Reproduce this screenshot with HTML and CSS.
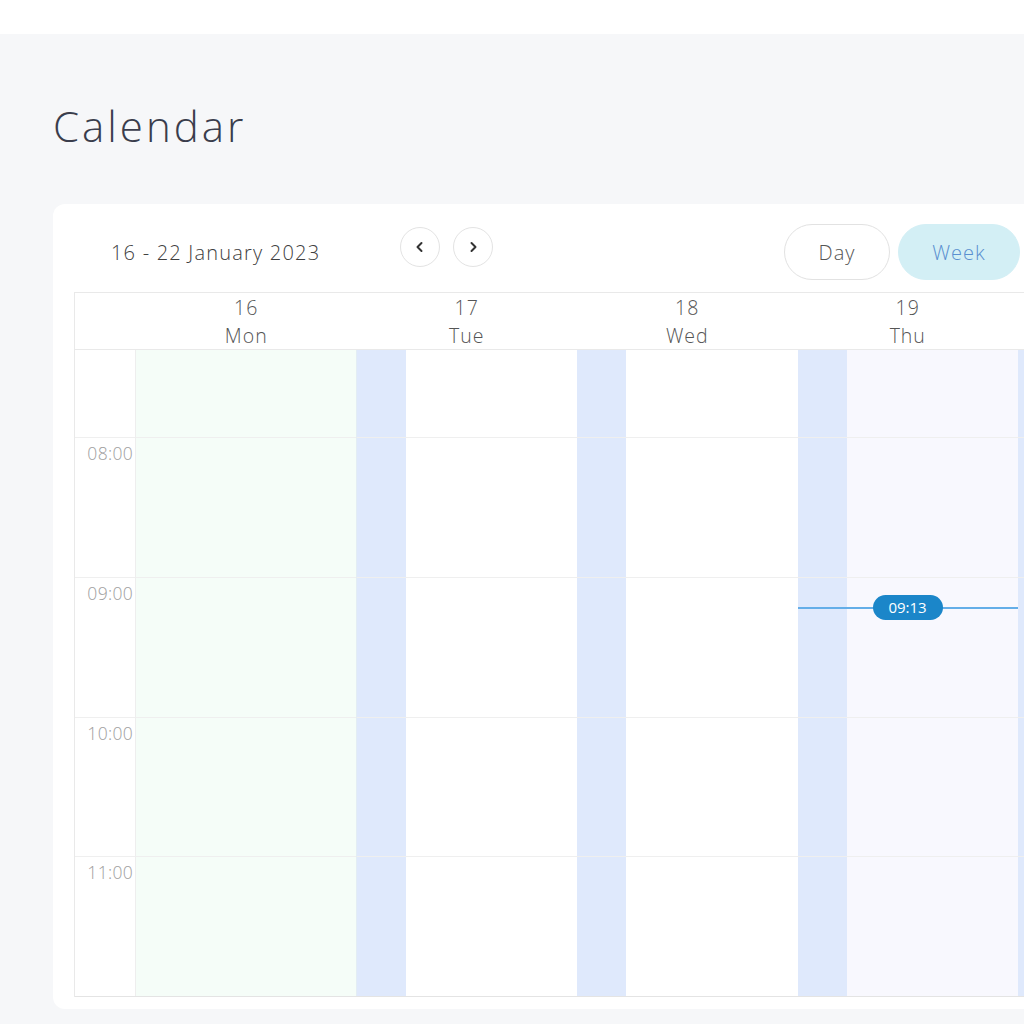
FILE: index.html
```html
<!DOCTYPE html>
<html>
<head>
<meta charset="utf-8">
<link rel="stylesheet" href="styles.css">
</head>
<body>
<div class="topbar"></div>
<main class="main">
  <h1 class="title">Calendar</h1>
  <section class="card">
    <div class="toolbar">
      <div class="range">16 - 22 January 2023</div>
      <div class="nav">
        <button class="circle" aria-label="Previous">
          <svg width="14" height="14" viewBox="0 0 14 14"><path d="M8.5 3 L4.5 7 L8.5 11" fill="none" stroke="#333" stroke-width="2" stroke-linecap="round" stroke-linejoin="round"/></svg>
        </button>
        <button class="circle" aria-label="Next">
          <svg width="14" height="14" viewBox="0 0 14 14"><path d="M5.5 3 L9.5 7 L5.5 11" fill="none" stroke="#333" stroke-width="2" stroke-linecap="round" stroke-linejoin="round"/></svg>
        </button>
      </div>
      <div class="views">
        <button class="pill">Day</button>
        <button class="pill active">Week</button>
      </div>
    </div>
    <div class="grid">
      <div class="head">
        <div class="hcell time"></div>
        <div class="hcell"><span>16</span><span>Mon</span></div>
        <div class="hcell"><span>17</span><span>Tue</span></div>
        <div class="hcell"><span>18</span><span>Wed</span></div>
        <div class="hcell"><span>19</span><span>Thu</span></div>
        <div class="hcell"></div>
      </div>
      <div class="body">
        <div class="col timecol">
          <div class="slot first"></div>
          <div class="slot"><span class="lbl">08:00</span></div>
          <div class="slot"><span class="lbl">09:00</span></div>
          <div class="slot"><span class="lbl">10:00</span></div>
          <div class="slot"><span class="lbl">11:00</span></div>
        </div>
        <div class="col today">
          <div class="slot first"></div><div class="slot"></div><div class="slot"></div><div class="slot"></div><div class="slot"></div>
        </div>
        <div class="col banded">
          <div class="slot first"></div><div class="slot"></div><div class="slot"></div><div class="slot"></div><div class="slot"></div>
        </div>
        <div class="col banded">
          <div class="slot first"></div><div class="slot"></div><div class="slot"></div><div class="slot"></div><div class="slot"></div>
        </div>
        <div class="col banded current">
          <div class="slot first"></div><div class="slot"></div><div class="slot"></div><div class="slot"></div><div class="slot"></div>
          <div class="now"><span class="now-badge">09:13</span></div>
        </div>
        <div class="col banded">
          <div class="slot first"></div><div class="slot"></div><div class="slot"></div><div class="slot"></div><div class="slot"></div>
        </div>
      </div>
    </div>
  </section>
</main>
</body>
</html>
```
FILE: styles.css
```css
* { box-sizing: border-box; }
html, body { margin: 0; padding: 0; }
body {
  width: 1024px;
  height: 1024px;
  overflow: hidden;
  background: #f6f7f9;
  font-family: "Open Sans", "Lato", sans-serif;
  color: #444;
}
.topbar {
  height: 34px;
  background: #ffffff;
}
.main {
  padding: 0 0 0 53px;
}
.title {
  margin: 0;
  padding-top: 66px;
  height: 170px;
  font-size: 42px;
  font-weight: 300;
  color: #3a3d4c;
  line-height: 52px;
  letter-spacing: 3px;
}
.card {
  width: 1100px;
  background: #ffffff;
  border-radius: 12px;
  padding: 20px 0 12px 21px;
}
.toolbar {
  display: flex;
  align-items: flex-start;
  height: 68px;
}
.range {
  margin-left: 37px;
  width: 289px;
  margin-top: 15px;
  font-size: 20px;
  font-weight: 300;
  color: #404040;
  letter-spacing: 1.2px;
  white-space: nowrap;
}
.nav {
  display: flex;
  gap: 13px;
  margin-top: 3px;
}
.circle {
  width: 40px;
  height: 40px;
  border-radius: 50%;
  border: 1px solid #e3e3e3;
  background: #fff;
  display: flex;
  align-items: center;
  justify-content: center;
  padding: 0;
}
.views {
  display: flex;
  gap: 8px;
  margin-left: 291px;
}
.pill {
  height: 56px;
  border-radius: 28px;
  border: 1px solid #e2e2e2;
  background: #fff;
  font-family: inherit;
  font-size: 20px;
  font-weight: 300;
  letter-spacing: 1px;
  color: #555;
  width: 106px;
  padding: 0;
}
.pill.active {
  width: 122px;
  border-color: #d3eff5;
  background: #d3eff5;
  color: #5a8fd0;
}
.grid {
  border-top: 1px solid #e9e9e9;
  border-left: 1px solid #e9e9e9;
}
.head {
  display: flex;
  height: 57px;
  border-bottom: 1px solid #e9e9e9;
}
.hcell {
  width: 220.5px;
  flex: none;
  display: flex;
  flex-direction: column;
  align-items: center;
  padding-top: 1px;
  font-size: 19.5px;
  font-weight: 300;
  letter-spacing: 1px;
  line-height: 28px;
  color: #555;
}
.hcell.time { width: 61px; }
.body {
  display: flex;
  border-bottom: 1px solid #e4e4e4;
}
.col {
  width: 220.5px;
  flex: none;
  position: relative;
}
.timecol {
  width: 61px;
  border-right: 1px solid #eeeeee;
}
.today {
  background: #f5fdf8;
  border-right: 1px solid #e3edf4;
}
.banded {
  background: linear-gradient(to right, #dfe9fc 49px, #ffffff 49px);
}
.banded.current {
  background: linear-gradient(to right, #dfe9fc 49px, #f8f8fe 49px);
}
.slot {
  height: 139.75px;
  border-bottom: 1px solid #efefef;
}
.col .slot:nth-child(5) { border-bottom: none; height: 139px; }
.slot.first { height: 88px; }
.timecol .slot { text-align: right; padding-right: 2px; padding-top: 3px; }
.lbl {
  font-size: 17.5px;
  font-weight: 300;
  color: #9e9e9e;
  letter-spacing: 0.3px;
}
.now {
  position: absolute;
  left: 0;
  right: 0;
  top: 257px;
  height: 2px;
  background: #64aee8;
}
.now-badge {
  position: absolute;
  left: 75px;
  top: -12px;
  width: 70px;
  height: 25px;
  border-radius: 13px;
  background: #1b86c9;
  color: #fff;
  font-size: 15px;
  line-height: 25px;
  text-align: center;
}
```
